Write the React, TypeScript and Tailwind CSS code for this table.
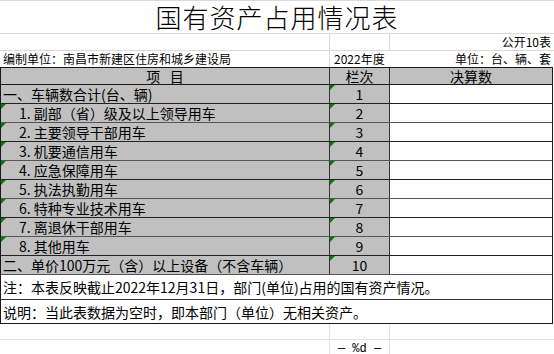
import React from 'react';

type Item = { label: string; no: string; indent: boolean };

const items: Item[] = [
  { label: '一、车辆数合计(台、辆)', no: '1', indent: false },
  { label: '1. 副部（省）级及以上领导用车', no: '2', indent: true },
  { label: '2. 主要领导干部用车', no: '3', indent: true },
  { label: '3. 机要通信用车', no: '4', indent: true },
  { label: '4. 应急保障用车', no: '5', indent: true },
  { label: '5. 执法执勤用车', no: '6', indent: true },
  { label: '6. 特种专业技术用车', no: '7', indent: true },
  { label: '7. 离退休干部用车', no: '8', indent: true },
  { label: '8. 其他用车', no: '9', indent: true },
  { label: '二、单价100万元（含）以上设备（不含车辆）', no: '10', indent: false },
];

function Mark() {
  return (
    <svg className="absolute left-0 top-0" width="5" height="5" viewBox="0 0 5 5">
      <polygon points="0,0 5,0 0,5" fill="#008000" />
    </svg>
  );
}

export default function App() {
  return (
    <div className="w-[554px] h-[354px] overflow-hidden bg-white text-black font-['Noto_Sans_CJK_SC',sans-serif]">
      {/* title */}
      <div className="h-[34px] border-t border-b border-[#dadada] flex items-center justify-center">
        <span className="text-[26px] leading-[28px] font-light tracking-[1px]">国有资产占用情况表</span>
      </div>

      {/* meta rows */}
      <div className="flex h-[17px] text-[12px] leading-none border-b border-[#dadada]">
        <div className="w-[330px] border-r border-[#dadada]" />
        <div className="w-[60px] border-r border-[#dadada]" />
        <div className="w-[163px] flex items-center justify-end pr-[2px]">公开10表</div>
      </div>
      <div className="flex h-[16px] text-[12px] leading-none items-center">
        <div className="w-[330px] pl-[3px] border-r border-[#dadada] h-full flex items-center">编制单位：南昌市新建区住房和城乡建设局</div>
        <div className="w-[60px] pl-[4px] h-full flex items-center">2022年度</div>
        <div className="w-[163px] flex items-center justify-end pr-[2px]">单位：台、辆、套</div>
      </div>

      {/* table */}
      <div className="w-[553px] border-t border-l border-r border-[#1a1a1a] text-[14px] leading-none">
        <div className="flex h-[17px] bg-[#c0c0c0] border-b border-[#1a1a1a]">
          <div className="w-[329px] border-r border-[#333] flex items-center justify-center">项&nbsp;&nbsp;&nbsp;目</div>
          <div className="w-[60px] border-r border-[#333] flex items-center justify-center">栏次</div>
          <div className="flex-1 flex items-center justify-center">决算数</div>
        </div>
        {items.map((it, i) => (
          <div key={it.no} className={`flex h-[19px] border-b ${i % 2 === 0 ? 'border-[#222]' : 'border-[#555]'}`}>
            <div className={`relative w-[329px] bg-[#c0c0c0] border-r border-[#333] flex items-center ${it.indent ? 'pl-[18px]' : 'pl-[2px]'}`}>
              {it.indent && <Mark />}
              {it.label}
            </div>
            <div className="relative w-[60px] bg-[#c0c0c0] border-r border-[#333] flex items-center justify-center">
              <Mark />
              <span>{it.no}</span>
            </div>
            <div className="flex-1 bg-white" />
          </div>
        ))}
        <div className="h-[25px] border-b border-[#333] flex items-center pl-[2px]">
          注：本表反映截止2022年12月31日，部门(单位)占用的国有资产情况。
        </div>
        <div className="h-[24px] border-b border-[#1a1a1a] flex items-center pl-[2px]">
          说明：当此表数据为空时，即本部门（单位）无相关资产。
        </div>
      </div>

      {/* empty grid rows */}
      <div className="flex h-[16px] border-b border-[#e2e2e2]">
        <div className="w-[330px] border-r border-[#e2e2e2]" />
        <div className="w-[60px] border-r border-[#e2e2e2]" />
        <div className="flex-1" />
      </div>
      <div className="flex h-[17px]">
        <div className="w-[330px] border-r border-[#e2e2e2]" />
        <div className="w-[60px] border-r border-[#e2e2e2] flex items-center justify-center text-[12px] leading-none font-['Liberation_Mono',monospace]">
          — %d —
        </div>
        <div className="flex-1" />
      </div>
    </div>
  );
}
